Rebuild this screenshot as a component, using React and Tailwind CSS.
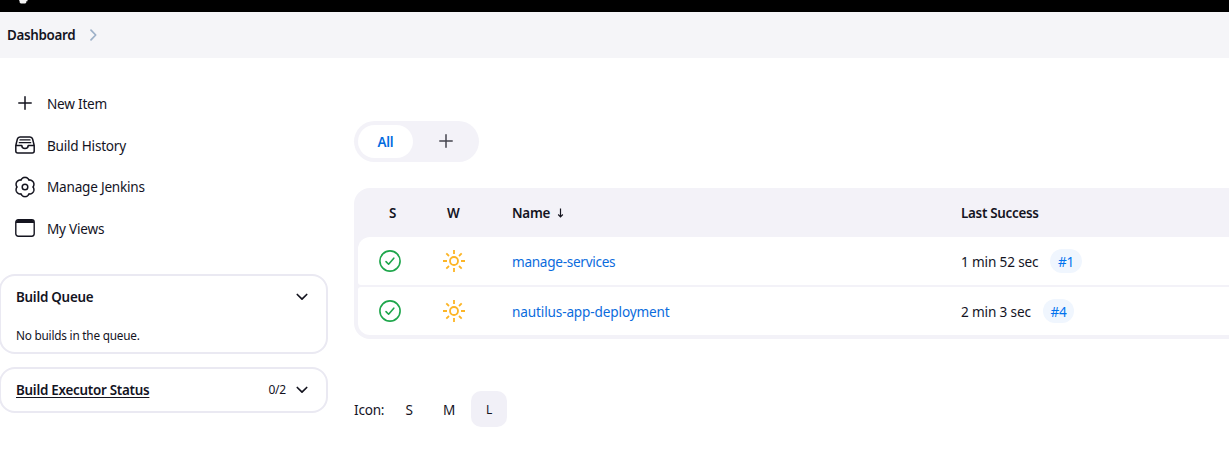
import React from "react";

const gearPath =
  Array.from({ length: 96 }, (_, i) => {
    const a = (i / 96) * Math.PI * 2;
    const r = 7.9 + 1.75 * Math.pow(Math.abs(Math.cos(3 * a)), 0.8);
    return `${i ? "L" : "M"}${(11 + r * Math.sin(a)).toFixed(2)} ${(11 - r * Math.cos(a)).toFixed(2)}`;
  }).join("") + "Z";

function Plus({ className }) {
  return (
    <svg className={className} width="14" height="14" viewBox="0 0 14 14" fill="none" stroke="currentColor" strokeWidth="1.5" strokeLinecap="round">
      <path d="M7 .8v12.4M.8 7h12.4" />
    </svg>
  );
}

function Tray() {
  return (
    <svg className="-mt-0.5" width="20" height="18" viewBox="0 0 20 18" fill="none" stroke="currentColor" strokeWidth="1.5" strokeLinecap="round" strokeLinejoin="round">
      <path d="M.8 9.500 2.400 3Q2.900.9 5 .9h10q2.100 0 2.600 2.100l1.600 6.500V15q0 2-2 2H2.800q-2 0-2-2zH6.800c0 1.700 1.300 3 3.200 3s3.200-1.300 3.200-3h6" />
      <path d="M5 3.900h10M4.300 6.700h11.400" strokeWidth="1.300" />
    </svg>
  );
}

function Gear() {
  return (
    <svg width="22" height="22" viewBox="0 0 22 22" fill="none" stroke="currentColor" strokeWidth="1.5" strokeLinejoin="round">
      <path d={gearPath} />
      <circle cx="11" cy="11" r="2.8" />
    </svg>
  );
}

function WindowIcon() {
  return (
    <svg className="-mt-0.5" width="20" height="18" viewBox="0 0 20 18" fill="none" stroke="currentColor" strokeWidth="1.4">
      <rect x=".8" y=".8" width="18.4" height="16.4" rx="2.4" />
      <path d="M1 2.8Q1.200 1 3 1h14q1.800 0 2 1.800V4H1z" fill="currentColor" stroke="none" />
    </svg>
  );
}

function Chevron() {
  return (
    <svg width="12" height="8" viewBox="0 0 12 8" fill="none" stroke="currentColor" strokeWidth="1.7" strokeLinecap="round" strokeLinejoin="round">
      <path d="M1.300 1.500 6 6.200l4.700-4.700" />
    </svg>
  );
}

function Success() {
  return (
    <svg width="22" height="22" viewBox="0 0 22 22" fill="none" stroke="#1ea64b" strokeLinecap="round" strokeLinejoin="round">
      <circle cx="11" cy="11" r="10.100" strokeWidth="1.600" />
      <path d="m7 11.600 2.600 2.600 5.200-6" strokeWidth="1.600" />
    </svg>
  );
}

function Sun() {
  return (
    <svg width="22" height="22" viewBox="0 0 22 22" fill="none" stroke="#fdb526" strokeWidth="1.8">
      <circle cx="11" cy="11" r="4" />
      <path d="M11 0v4M11 18v4M0 11h4M18 11h4M3.300 3.300l2.700 2.700M16 16l2.700 2.700M3.300 18.700 6 16M16 6l2.700-2.700" />
    </svg>
  );
}

const tasks = [
  { label: "New Item", icon: <Plus className="-mt-0.5" /> },
  { label: "Build History", icon: <Tray /> },
  { label: "Manage Jenkins", icon: <Gear /> },
  { label: "My Views", icon: <WindowIcon /> },
];

const jobs = [
  { name: "manage-services", time: "1 min 52 sec", build: "#1", shape: "rounded-tl-[12px] rounded-bl-[3px]", badge: "ml-[89px] w-8", track: "tracking-[-0.29px]" },
  { name: "nautilus-app-deployment", time: "2 min 3 sec", build: "#4", shape: "rounded-tl-[3px] rounded-bl-[12px]", badge: "ml-[82px] w-[31px]", track: "tracking-[-0.14px]" },
];

export default function App() {
  return (
    <div className="h-[455px] w-[1229px] overflow-hidden bg-white font-['Noto_Sans',sans-serif] text-[13.6px] leading-5 tracking-[-0.23px] text-[#14141f]">
      <header className="h-3 bg-black pl-[18px]">
        <svg width="11" height="4" viewBox="0 0 11 4">
          <path d="M1 0h8.500v1.200H8.300v1.300L7.300 3.400H2.800L1.600 2.400V1.200z" fill="#f4f4f4" />
        </svg>
      </header>
      <nav className="flex h-[46px] items-center bg-[#f5f5f8] pl-[7px]">
        <span className="w-[83px] text-[13.4px] font-semibold tracking-[-0.33px]">Dashboard</span>
        <svg width="7" height="12" viewBox="0 0 7 12" fill="none" stroke="#9db0c8" strokeWidth="1.700" strokeLinecap="round" strokeLinejoin="round">
          <path d="m1 1.200 4.700 4.800L1 10.800" />
        </svg>
      </nav>
      <div className="flex">
        <aside className="-ml-px w-[329px] shrink-0 pt-[25px]">
          <ul className="flex flex-col pl-[15px]">
            {tasks.map((t) => (
              <li key={t.label} className="flex h-[41.7px] items-center">
                <span className="mr-[11px] flex w-[22px] justify-center">{t.icon}</span>
                <span>{t.label}</span>
              </li>
            ))}
          </ul>
          <section className="mt-6 h-20 rounded-[16px] border-2 border-[#eae9f2] px-[15px] pt-[11px]">
            <div className="flex items-center justify-between pr-[3px]">
              <h2 className="text-[13.4px] font-semibold tracking-[-0.25px]">Build Queue</h2>
              <Chevron />
            </div>
            <p className="mt-[18px] text-[11.800px] tracking-[-0.22px]">No builds in the queue.</p>
          </section>
          <section className="mt-[13px] flex h-[46px] items-center rounded-[16px] border-2 border-[#eae9f2] pr-[18px] pl-[15px]">
            <h2 className="flex-1 text-[13.4px] font-semibold tracking-[-0.26px]">
              <span className="underline decoration-1 underline-offset-2">Build Executor Status</span>
            </h2>
            <span className="mr-[10px] text-[12px]">0/2</span>
            <Chevron />
          </section>
        </aside>
        <main className="ml-[26px] w-[875px] shrink-0 pt-[63px]">
          <div className="flex h-[41px] w-[125px] items-center rounded-full bg-[#f3f2f8] p-1">
            <span className="flex h-[33px] w-[55px] items-center justify-center rounded-full bg-white text-[13.4px] font-semibold text-[#006be0]">All</span>
            <span className="flex flex-1 justify-center pl-[3px]">
              <Plus className="-mt-0.5 text-[#45454f]" />
            </span>
          </div>
          <div className="mt-[26px] flex h-[151px] flex-col gap-0.5 rounded-l-[16px] bg-[#f3f2f8] pb-1 pl-1">
            <div className="-mb-0.5 flex h-[49px] shrink-0 items-center text-[13.4px] font-semibold tracking-[-0.28px]">
              <span className="w-[70px] pl-[31px]">S</span>
              <span className="w-[84px] pl-[19px]">W</span>
              <span className="flex w-[449px] items-center">
                Name
                <svg className="ml-[7px]" width="7" height="10" viewBox="0 0 7 10" fill="none" stroke="currentColor" strokeWidth="1.2">
                  <path d="M3.500 .5v8M1.200 6.500l2.300 2.300 2.300-2.300" />
                </svg>
              </span>
              <span>Last Success</span>
            </div>
            {jobs.map((j) => (
              <div key={j.name} className={`flex h-12 shrink-0 items-center bg-white ${j.shape}`}>
                <span className="w-[85px] pl-[21px]">
                  <Success />
                </span>
                <span className="w-[69px]">
                  <Sun />
                </span>
                <span className={`w-[449px] pt-0.5 text-[#0b6cdd] ${j.track}`}>{j.name}</span>
                <span className="w-0 pt-0.5 tracking-[-0.15px] whitespace-nowrap">{j.time}</span>
                <span className={`flex h-6 items-center justify-center rounded-full bg-[#f0f6fe] pt-px text-[#0073ee] ${j.badge}`}>{j.build}</span>
              </div>
            ))}
          </div>
          <div className="mt-[52px] flex h-9 items-center">
            <span className="w-[37px] pt-0.5">Icon:</span>
            <span className="w-9 pt-0.5 text-center">S</span>
            <span className="ml-1 w-9 pt-0.5 text-center">M</span>
            <span className="ml-1 flex h-9 w-9 items-center justify-center rounded-[10px] bg-[#f1f0f7] pt-px text-[12px]">L</span>
          </div>
        </main>
      </div>
    </div>
  );
}
